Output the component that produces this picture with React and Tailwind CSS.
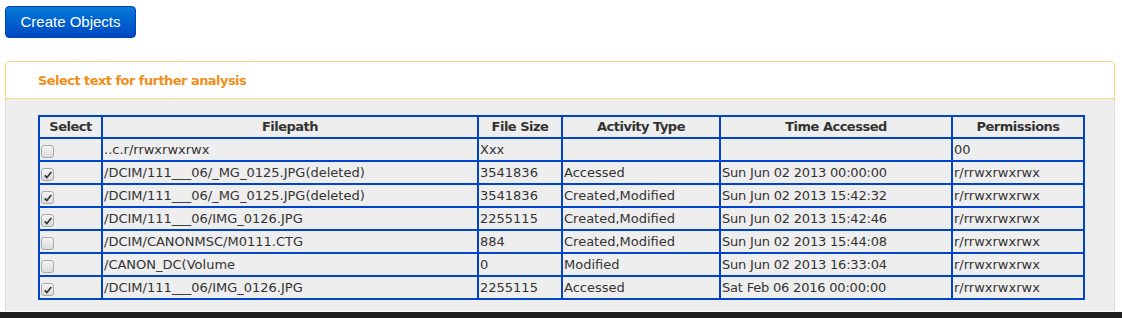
import React from "react";

const rows = [
  { checked: false, path: "..c.r/rrwxrwxrwx", size: "Xxx", type: "", time: "", perm: "00" },
  { checked: true, path: "/DCIM/111___06/_MG_0125.JPG(deleted)", size: "3541836", type: "Accessed", time: "Sun Jun 02 2013 00:00:00", perm: "r/rrwxrwxrwx" },
  { checked: true, path: "/DCIM/111___06/_MG_0125.JPG(deleted)", size: "3541836", type: "Created,Modified", time: "Sun Jun 02 2013 15:42:32", perm: "r/rrwxrwxrwx" },
  { checked: true, path: "/DCIM/111___06/IMG_0126.JPG", size: "2255115", type: "Created,Modified", time: "Sun Jun 02 2013 15:42:46", perm: "r/rrwxrwxrwx" },
  { checked: false, path: "/DCIM/CANONMSC/M0111.CTG", size: "884", type: "Created,Modified", time: "Sun Jun 02 2013 15:44:08", perm: "r/rrwxrwxrwx" },
  { checked: false, path: "/CANON_DC(Volume", size: "0", type: "Modified", time: "Sun Jun 02 2013 16:33:04", perm: "r/rrwxrwxrwx" },
  { checked: true, path: "/DCIM/111___06/IMG_0126.JPG", size: "2255115", type: "Accessed", time: "Sat Feb 06 2016 00:00:00", perm: "r/rrwxrwxrwx" },
];

const headers = ["Select", "Filepath", "File Size", "Activity Type", "Time Accessed", "Permissions"];

function Check({ checked }) {
  // greyed-out native style checkbox
  return (
    <span className="inline-block w-[13px] h-[13px] rounded-[3px] border border-[#a9a9a9] bg-gradient-to-b from-[#f4f4f4] to-[#dcdcdc] relative align-middle">
      {checked && (
        <svg viewBox="0 0 12 12" className="absolute left-[1px] top-[1px] w-[10px] h-[10px]">
          <path d="M2 6.5 L4.6 9 L10 2.5" fill="none" stroke="#333" strokeWidth="2" />
        </svg>
      )}
    </span>
  );
}

export default function App() {
  return (
    <div className="w-[1122px] h-[318px] bg-white flex flex-col overflow-hidden" style={{ fontFamily: "Tahoma, 'DejaVu Sans', sans-serif" }}>
      <button className="mt-[6px] ml-[5px] w-[131px] h-[32px] rounded-[4px] border border-[#0045b5] bg-gradient-to-b from-[#0a7ad8] to-[#0047c2] text-white text-[15px] font-['Liberation_Sans',Arial,sans-serif] self-start">
        Create Objects
      </button>

      {/* Panel */}
      <div className="mt-[23px] ml-[5px] w-[1110px] flex flex-col">
        <div className="h-[38px] border border-[#fbd97a] rounded-t-[4px] bg-white flex items-center pl-[32px] pt-[1px]">
          <span className="text-[#ef8f1a] font-bold text-[13px] font-['DejaVu_Sans',sans-serif] tracking-[-0.55px]">
            Select text for further analysis
          </span>
        </div>
        <div className="h-[212px] bg-[#eeeeee] border-x border-[#dddddd] pt-[16px] pl-[32px]">
          <table className="table-fixed border-collapse w-[1045px] text-[13px] text-[#333] font-['DejaVu_Sans',sans-serif]">
            <colgroup>
              <col className="w-[63px]" />
              <col className="w-[376px]" />
              <col className="w-[84px]" />
              <col className="w-[158px]" />
              <col className="w-[232px]" />
              <col className="w-[132px]" />
            </colgroup>
            <thead>
              <tr className="h-[22px]">
                {headers.map((h) => (
                  <th key={h} className="border-2 border-[#0044cc] font-bold text-center p-0 leading-[18px] text-[#333] tracking-[-0.5px]">
                    {h}
                  </th>
                ))}
              </tr>
            </thead>
            <tbody>
              {rows.map((r, i) => (
                <tr key={i} className="h-[23px]">
                  <td className="border-2 border-[#0044cc] px-[1px] pt-[3px] leading-[18px]">
                    <Check checked={r.checked} />
                  </td>
                  <td className="border-2 border-[#0044cc] px-[1px] leading-[18px]">{r.path}</td>
                  <td className="border-2 border-[#0044cc] px-[1px] leading-[18px]">{r.size}</td>
                  <td className="border-2 border-[#0044cc] px-[1px] leading-[18px]">{r.type}</td>
                  <td className="border-2 border-[#0044cc] px-[1px] leading-[18px] tracking-[-0.2px]">{r.time}</td>
                  <td className="border-2 border-[#0044cc] px-[1px] leading-[18px]">{r.perm}</td>
                </tr>
              ))}
            </tbody>
          </table>
        </div>
      </div>

      <div className="mt-[1px] h-[6px] bg-[#1e1e1e]" />
    </div>
  );
}
